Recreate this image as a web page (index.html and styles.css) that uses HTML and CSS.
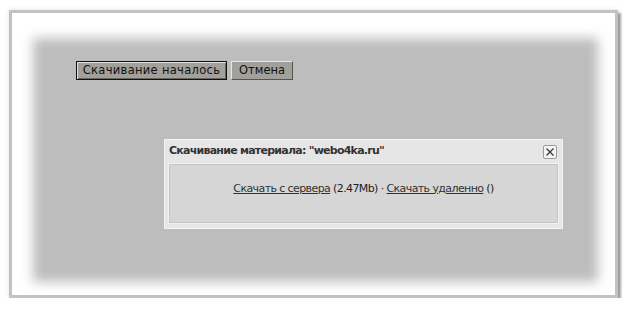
FILE: index.html
```html
<!DOCTYPE html>
<html>
<head>
<meta charset="utf-8">
<link rel="stylesheet" href="styles.css">
</head>
<body>
<div class="frame">
  <div class="actions">
    <button class="btn btn-default">Скачивание началось</button>
    <button class="btn btn-cancel">Отмена</button>
  </div>
  <div class="dialog">
    <div class="dialog-head">
      <span class="dialog-title">Скачивание материала: "webo4ka.ru"</span>
      <span class="close">
        <svg width="10" height="10" viewBox="0 0 10 10"><path d="M1.5 1.5 L8.5 8.5 M8.5 1.5 L1.5 8.5" stroke="#333" stroke-width="1.2" fill="none"/></svg>
      </span>
    </div>
    <div class="dialog-body">
      <span class="links"><a href="#">Скачать с сервера</a> (2.47Mb) · <a href="#">Скачать удаленно</a> ()</span>
    </div>
  </div>
</div>
</body>
</html>
```
FILE: styles.css
```css
html, body {
  margin: 0;
  padding: 0;
  background: #fff;
}
body {
  padding: 10px 0 0 9px;
  font-family: "DejaVu Sans", Verdana, sans-serif;
}
.frame {
  position: relative;
  box-sizing: border-box;
  width: 609px;
  height: 288px;
  border: 3px solid #c2c2c2;
  background: #bdbdbd;
  box-shadow: inset 2px 6px 12px 19px #fff, 3px 3px 2px rgba(0,0,0,0.35), 0 0 5px rgba(0,0,0,0.12);
  padding: 48px 0 0 64px;
}
.actions {
  display: flex;
  gap: 4px;
}
.btn {
  box-sizing: border-box;
  height: 19px;
  margin: 0;
  padding: 0;
  font-family: "DejaVu Sans", Verdana, sans-serif;
  font-size: 11.5px;
  color: #111;
  background: #a2a09a;
  border: 1px solid;
  border-color: #e8e8e4 #55544f #55544f #e8e8e4;
  line-height: 15px;
  text-align: center;
}
.btn-default {
  border: 1px solid #111;
  box-shadow: inset 1px 1px 0 #e2e1dc, inset -1px -1px 0 #66655f;
  width: 151px;
  letter-spacing: 0.3px;
}
.btn-cancel {
  width: 62px;
}
.dialog {
  position: absolute;
  left: 152px;
  top: 126px;
  width: 399px;
  height: 90px;
  box-sizing: border-box;
  background: #e6e6e6;
  border: 1px solid #f4f4f4;
  padding: 0 4px 5px 4px;
  display: flex;
  flex-direction: column;
}
.dialog-head {
  height: 24px;
  display: flex;
  align-items: center;
  justify-content: space-between;
}
.dialog-title {
  font-weight: bold;
  font-size: 11px;
  letter-spacing: -0.75px;
  color: #333;
  margin-top: -3px;
}
.close {
  box-sizing: border-box;
  width: 14px;
  height: 14px;
  border: 1px solid #9a9a9a;
  border-radius: 2px;
  background: #f4f4f4;
  display: flex;
  align-items: center;
  justify-content: center;
  margin-right: 1px;
}
.dialog-body {
  flex: 1;
  background: #d6d6d6;
  border: 1px solid #c4c4cb;
  box-shadow: 0 0 0 1px #f2f2f2;
  display: flex;
  align-items: center;
  justify-content: center;
  padding-bottom: 11px;
}
.links {
  font-size: 11px;
  letter-spacing: -0.6px;
  color: #222;
}
.links a {
  color: #333;
  text-decoration: underline;
}
```
